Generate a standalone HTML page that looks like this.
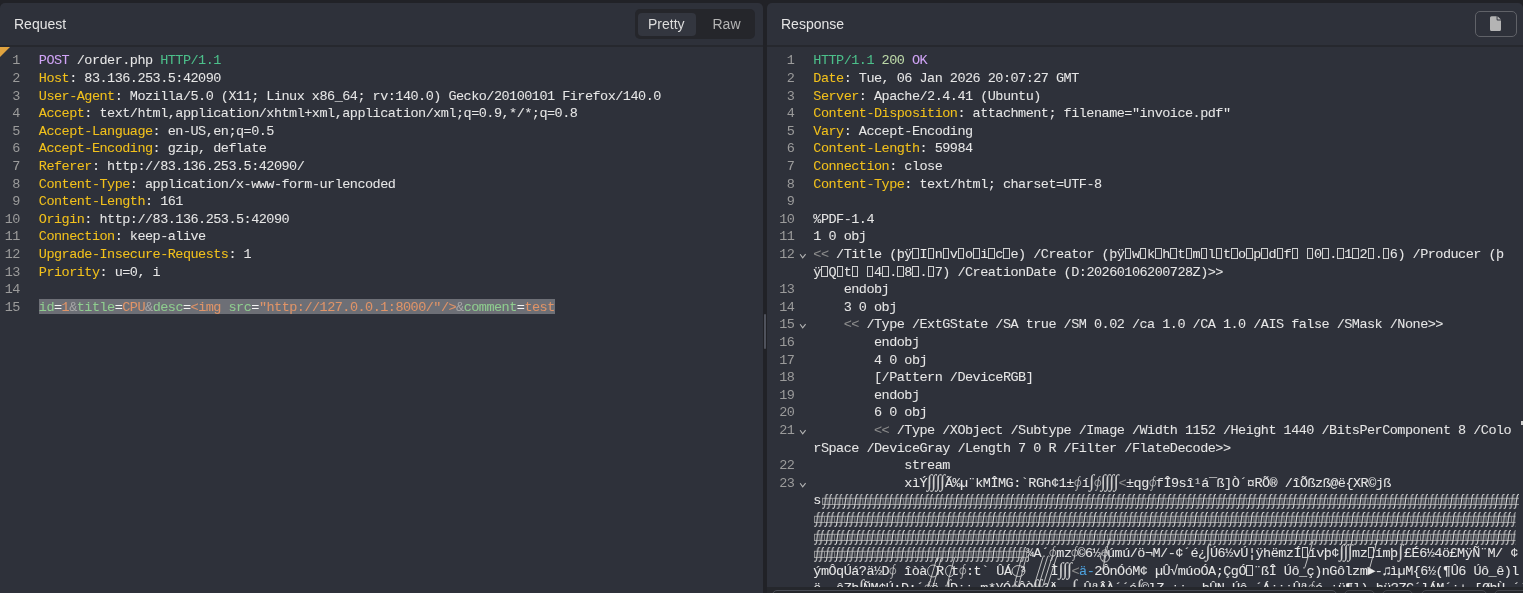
<!DOCTYPE html>
<html><head><meta charset="utf-8"><style>
*{margin:0;padding:0;box-sizing:border-box}
html,body{width:1523px;height:593px;overflow:hidden;background:#212227}
#wrap{position:absolute;left:0;top:0;width:1523px;height:593px;will-change:transform}
body{position:relative;font-family:"Liberation Sans",sans-serif}
.panel{position:absolute;top:3px;height:600px;background:#2e313a;border-radius:5px 5px 0 0;overflow:hidden}
#req{left:0;width:763px}
#res{left:767px;width:756px}
.hdr{position:absolute;left:0;top:0;right:0;height:44px;border-bottom:2px solid #26282e}
.title{position:absolute;top:13px;font-size:14px;color:#e4e4e4}
.ln,.num{position:absolute;white-space:pre;font-family:"Liberation Mono",monospace;font-size:13.5px;letter-spacing:-0.516px;line-height:17px;height:17px;}
.ln{-webkit-text-stroke:0.05px currentColor}
.num{width:40px;text-align:right;color:#9b9b9b}
.sel{background:#6c6e75}
.W{color:#f4f4f4}.y{color:#f2c11c}.w{color:#e6e6e6}.p{color:#d0a4f6}.g{color:#4cbf8a}.lg{color:#bcd8a8}.n{color:#9b9b9b}.d{color:#8d8d8d}.G{color:#8fcd8f}.o{color:#e09468}.a{color:#a7a7a7}.b{color:#4ea3e0}
.fold{position:absolute}
.ig{position:absolute;white-space:pre;font-family:"Liberation Serif",serif;font-style:italic;font-size:18px;letter-spacing:-0.65px;line-height:17px;color:#cfcfcf;-webkit-text-stroke:0.1px #cfcfcf}
.og{position:absolute}
.tf{display:inline-block;width:6.5px;height:11px;border:1px solid #cfcfcf;margin-left:0.5px;margin-right:0.585px;vertical-align:-1px}
.seg{position:absolute;left:635px;top:6px;width:120px;height:30px;background:#25262b;border-radius:5px}
.pill{position:absolute;left:3px;top:4px;width:58px;height:23px;background:#33363f;border-radius:4px}
.segt{position:absolute;top:7px;font-size:14px}
.ibtn{position:absolute;left:708px;top:8px;width:42px;height:26px;border:1px solid #606268;border-radius:5px}
</style></head><body><div id="wrap">
<div class="panel" id="req"><div class="hdr"><div class="title" style="left:14px">Request</div>
<div class="seg"><div class="pill"></div><div class="segt" style="left:13px;color:#dcdcdc">Pretty</div><div class="segt" style="left:77.5px;color:#b4b4b4">Raw</div></div></div>
<div style="position:absolute;left:0;top:44px;width:0;height:0;border-top:10px solid #e0a33f;border-right:10px solid transparent"></div>
</div>
<div class="panel" id="res"><div class="hdr"><div class="title" style="left:14px">Response</div>
<div class="ibtn"><svg width="41" height="25" style="position:absolute;left:-2px;top:-2px"><path d="M17.5 6.2H22.6V9.4a1 1 0 0 0 1 1H27V19.4a1.5 1.5 0 0 1-1.5 1.5H17.5a1.5 1.5 0 0 1-1.5-1.5V7.7a1.5 1.5 0 0 1 1.5-1.5z" fill="#b4b4b4"/><path d="M23.5 6.3L27 9.6H24a0.5 0.5 0 0 1-0.5-0.5z" fill="#b4b4b4"/></svg></div></div>
</div>
<div class="num" style="left:-20.2px;top:52.00px">1</div>
<div class="ln " style="left:38.8px;top:52.00px"><span class="p">POST</span><span class="w"> /order.php </span><span class="g">HTTP/1.1</span></div>
<div class="num" style="left:-20.2px;top:70.00px">2</div>
<div class="ln " style="left:38.8px;top:70.00px"><span class="y">Host</span><span class="w">: 83.136.253.5:42090</span></div>
<div class="num" style="left:-20.2px;top:88.00px">3</div>
<div class="ln " style="left:38.8px;top:88.00px"><span class="y">User-Agent</span><span class="w">: Mozilla/5.0 (X11; Linux x86_64; rv:140.0) Gecko/20100101 Firefox/140.0</span></div>
<div class="num" style="left:-20.2px;top:105.00px">4</div>
<div class="ln " style="left:38.8px;top:105.00px"><span class="y">Accept</span><span class="w">: text/html,application/xhtml+xml,application/xml;q=0.9,*/*;q=0.8</span></div>
<div class="num" style="left:-20.2px;top:123.00px">5</div>
<div class="ln " style="left:38.8px;top:123.00px"><span class="y">Accept-Language</span><span class="w">: en-US,en;q=0.5</span></div>
<div class="num" style="left:-20.2px;top:140.00px">6</div>
<div class="ln " style="left:38.8px;top:140.00px"><span class="y">Accept-Encoding</span><span class="w">: gzip, deflate</span></div>
<div class="num" style="left:-20.2px;top:158.00px">7</div>
<div class="ln " style="left:38.8px;top:158.00px"><span class="y">Referer</span><span class="w">: http://83.136.253.5:42090/</span></div>
<div class="num" style="left:-20.2px;top:176.00px">8</div>
<div class="ln " style="left:38.8px;top:176.00px"><span class="y">Content-Type</span><span class="w">: application/x-www-form-urlencoded</span></div>
<div class="num" style="left:-20.2px;top:193.00px">9</div>
<div class="ln " style="left:38.8px;top:193.00px"><span class="y">Content-Length</span><span class="w">: 161</span></div>
<div class="num" style="left:-20.2px;top:211.00px">10</div>
<div class="ln " style="left:38.8px;top:211.00px"><span class="y">Origin</span><span class="w">: http://83.136.253.5:42090</span></div>
<div class="num" style="left:-20.2px;top:228.00px">11</div>
<div class="ln " style="left:38.8px;top:228.00px"><span class="y">Connection</span><span class="w">: keep-alive</span></div>
<div class="num" style="left:-20.2px;top:246.00px">12</div>
<div class="ln " style="left:38.8px;top:246.00px"><span class="y">Upgrade-Insecure-Requests</span><span class="w">: 1</span></div>
<div class="num" style="left:-20.2px;top:264.00px">13</div>
<div class="ln " style="left:38.8px;top:264.00px"><span class="y">Priority</span><span class="w">: u=0, i</span></div>
<div class="num" style="left:-20.2px;top:281.00px">14</div>
<div class="num" style="left:-20.2px;top:299.00px">15</div>
<div style="position:absolute;left:39px;top:299px;width:516px;height:15px;background:#6d6f76"></div>
<div class="ln " style="left:38.8px;top:299.00px"><span class="G">id</span><span class="W">=</span><span class="o">1</span><span class="a">&amp;</span><span class="G">title</span><span class="W">=</span><span class="o">CPU</span><span class="a">&amp;</span><span class="G">desc</span><span class="W">=</span><span class="o">&lt;img</span><span class="W"> </span><span class="G">src</span><span class="W">=</span><span class="o">"http://127.0.0.1:8000/"/&gt;</span><span class="a">&amp;</span><span class="G">comment</span><span class="W">=</span><span class="o">test</span></div>
<div class="num" style="left:754.3px;top:52.00px">1</div>
<div class="ln " style="left:813.3px;top:52.00px"><span class="g">HTTP/1.1</span><span class="w"> </span><span class="lg">200</span><span class="w"> </span><span class="p">OK</span></div>
<div class="num" style="left:754.3px;top:70.00px">2</div>
<div class="ln " style="left:813.3px;top:70.00px"><span class="y">Date</span><span class="w">: Tue, 06 Jan 2026 20:07:27 GMT</span></div>
<div class="num" style="left:754.3px;top:88.00px">3</div>
<div class="ln " style="left:813.3px;top:88.00px"><span class="y">Server</span><span class="w">: Apache/2.4.41 (Ubuntu)</span></div>
<div class="num" style="left:754.3px;top:105.00px">4</div>
<div class="ln " style="left:813.3px;top:105.00px"><span class="y">Content-Disposition</span><span class="w">: attachment; filename="invoice.pdf"</span></div>
<div class="num" style="left:754.3px;top:123.00px">5</div>
<div class="ln " style="left:813.3px;top:123.00px"><span class="y">Vary</span><span class="w">: Accept-Encoding</span></div>
<div class="num" style="left:754.3px;top:140.00px">6</div>
<div class="ln " style="left:813.3px;top:140.00px"><span class="y">Content-Length</span><span class="w">: 59984</span></div>
<div class="num" style="left:754.3px;top:158.00px">7</div>
<div class="ln " style="left:813.3px;top:158.00px"><span class="y">Connection</span><span class="w">: close</span></div>
<div class="num" style="left:754.3px;top:176.00px">8</div>
<div class="ln " style="left:813.3px;top:176.00px"><span class="y">Content-Type</span><span class="w">: text/html; charset=UTF-8</span></div>
<div class="num" style="left:754.3px;top:193.00px">9</div>
<div class="num" style="left:754.3px;top:211.00px">10</div>
<div class="ln " style="left:813.3px;top:211.00px"><span class="w">%PDF-1.4</span></div>
<div class="num" style="left:754.3px;top:228.00px">11</div>
<div class="ln " style="left:813.3px;top:228.00px"><span class="w">1 0 obj</span></div>
<div class="num" style="left:754.3px;top:246.00px">12</div>
<svg class="fold" style="left:799px;top:252.50px" width="8" height="8"><path d="M1.1 1.2L3.7 4.9L6.6 1.2" stroke="#b4b4b4" stroke-width="1.1" fill="none"/></svg>
<div class="ln " style="left:813.3px;top:246.00px"><span class="d">&lt;&lt;</span><span class="w"> /Title (þÿ<i class="tf"></i>I<i class="tf"></i>n<i class="tf"></i>v<i class="tf"></i>o<i class="tf"></i>i<i class="tf"></i>c<i class="tf"></i>e) /Creator (þÿ<i class="tf"></i>w<i class="tf"></i>k<i class="tf"></i>h<i class="tf"></i>t<i class="tf"></i>m<i class="tf"></i>l<i class="tf"></i>t<i class="tf"></i>o<i class="tf"></i>p<i class="tf"></i>d<i class="tf"></i>f<i class="tf"></i> <i class="tf"></i>0<i class="tf"></i>.<i class="tf"></i>1<i class="tf"></i>2<i class="tf"></i>.<i class="tf"></i>6) /Producer (þ</span></div>
<div class="ln " style="left:813.3px;top:264.00px"><span class="w">ÿ<i class="tf"></i>Q<i class="tf"></i>t<i class="tf"></i> <i class="tf"></i>4<i class="tf"></i>.<i class="tf"></i>8<i class="tf"></i>.<i class="tf"></i>7) /CreationDate (D:20260106200728Z)&gt;&gt;</span></div>
<div class="num" style="left:754.3px;top:281.00px">13</div>
<div class="ln " style="left:813.3px;top:281.00px"><span class="w">    endobj</span></div>
<div class="num" style="left:754.3px;top:299.00px">14</div>
<div class="ln " style="left:813.3px;top:299.00px"><span class="w">    3 0 obj</span></div>
<div class="num" style="left:754.3px;top:316.00px">15</div>
<svg class="fold" style="left:799px;top:322.50px" width="8" height="8"><path d="M1.1 1.2L3.7 4.9L6.6 1.2" stroke="#b4b4b4" stroke-width="1.1" fill="none"/></svg>
<div class="ln " style="left:813.3px;top:316.00px"><span class="w">    </span><span class="d">&lt;&lt;</span><span class="w"> /Type /ExtGState /SA true /SM 0.02 /ca 1.0 /CA 1.0 /AIS false /SMask /None&gt;&gt;</span></div>
<div class="num" style="left:754.3px;top:334.00px">16</div>
<div class="ln " style="left:813.3px;top:334.00px"><span class="w">        endobj</span></div>
<div class="num" style="left:754.3px;top:352.00px">17</div>
<div class="ln " style="left:813.3px;top:352.00px"><span class="w">        4 0 obj</span></div>
<div class="num" style="left:754.3px;top:369.00px">18</div>
<div class="ln " style="left:813.3px;top:369.00px"><span class="w">        [/Pattern /DeviceRGB]</span></div>
<div class="num" style="left:754.3px;top:387.00px">19</div>
<div class="ln " style="left:813.3px;top:387.00px"><span class="w">        endobj</span></div>
<div class="num" style="left:754.3px;top:404.00px">20</div>
<div class="ln " style="left:813.3px;top:404.00px"><span class="w">        6 0 obj</span></div>
<div class="num" style="left:754.3px;top:422.00px">21</div>
<svg class="fold" style="left:799px;top:428.50px" width="8" height="8"><path d="M1.1 1.2L3.7 4.9L6.6 1.2" stroke="#b4b4b4" stroke-width="1.1" fill="none"/></svg>
<div class="ln " style="left:813.3px;top:422.00px"><span class="w">        </span><span class="d">&lt;&lt;</span><span class="w"> /Type /XObject /Subtype /Image /Width 1152 /Height 1440 /BitsPerComponent 8 /Colo</span></div>
<div class="ln " style="left:813.3px;top:440.00px"><span class="w">rSpace /DeviceGray /Length 7 0 R /Filter /FlateDecode&gt;&gt;</span></div>
<div class="num" style="left:754.3px;top:457.00px">22</div>
<div class="ln " style="left:813.3px;top:457.00px"><span class="w">            stream</span></div>
<div class="num" style="left:754.3px;top:475.00px">23</div>
<svg class="fold" style="left:799px;top:481.50px" width="8" height="8"><path d="M1.1 1.2L3.7 4.9L6.6 1.2" stroke="#b4b4b4" stroke-width="1.1" fill="none"/></svg>
<div class="ln " style="left:904.3px;top:475.00px"><span class="w">xìÝ</span></div>
<div class="ig" style="left:927.1px;top:472.50px">∫∫∫∫</div>
<div class="ln " style="left:944.9px;top:475.00px"><span class="w">Ã%µ¨kMÎMG:`RGh¢1±</span></div>
<svg class="og" style="left:1074.2px;top:475.00px" width="8" height="17"><ellipse cx="3.8" cy="8" rx="3" ry="3.2" stroke="#c4c4c4" stroke-width="0.8" fill="none"/><path d="M1.2 15.2C2.2 16 2.9 15.4 3.2 13.7L4.6 3.3C4.9 1.5 5.7 1.0 6.7 1.8" stroke="#d0d0d0" stroke-width="0.9" fill="none"/></svg>
<div class="ln " style="left:1081.8px;top:475.00px"><span class="w">í</span></div>
<div class="ig" style="left:1089.2px;top:472.50px">∫</div>
<svg class="og" style="left:1093.5px;top:475.00px" width="8" height="17"><ellipse cx="3.8" cy="8" rx="3" ry="3.2" stroke="#c4c4c4" stroke-width="0.8" fill="none"/><path d="M1.2 15.2C2.2 16 2.9 15.4 3.2 13.7L4.6 3.3C4.9 1.5 5.7 1.0 6.7 1.8" stroke="#d0d0d0" stroke-width="0.9" fill="none"/></svg>
<div class="ig" style="left:1100.8px;top:472.50px">∫∫∫∫</div>
<div class="ln " style="left:1118.4px;top:475.00px"><span class="d">&lt;</span></div>
<div class="ln " style="left:1126.0px;top:475.00px"><span class="w">±qg</span></div>
<svg class="og" style="left:1148.7px;top:475.00px" width="8" height="17"><ellipse cx="3.8" cy="8" rx="3" ry="3.2" stroke="#c4c4c4" stroke-width="0.8" fill="none"/><path d="M1.2 15.2C2.2 16 2.9 15.4 3.2 13.7L4.6 3.3C4.9 1.5 5.7 1.0 6.7 1.8" stroke="#d0d0d0" stroke-width="0.9" fill="none"/></svg>
<div class="ln " style="left:1155.8px;top:475.00px"><span class="w">fÎ9sî¹á¯ß]Ò´¤RÕ® /îÕßzß@ë{XR©jß</span></div>
<div class="ln " style="left:813.3px;top:492.00px"><span class="w">s</span></div>
<div class="ln " style="left:1026.0px;top:545.00px"><span class="w">¾A´</span></div>
<svg class="og" style="left:1049.0px;top:545.00px" width="8" height="17"><ellipse cx="3.8" cy="8" rx="3" ry="3.2" stroke="#c4c4c4" stroke-width="0.8" fill="none"/><path d="M1.2 15.2C2.2 16 2.9 15.4 3.2 13.7L4.6 3.3C4.9 1.5 5.7 1.0 6.7 1.8" stroke="#d0d0d0" stroke-width="0.9" fill="none"/></svg>
<div class="ln " style="left:1056.3px;top:545.00px"><span class="w">mz</span></div>
<svg class="og" style="left:1071.0px;top:545.00px" width="8" height="17"><ellipse cx="3.8" cy="8" rx="3" ry="3.2" stroke="#c4c4c4" stroke-width="0.8" fill="none"/><path d="M1.2 15.2C2.2 16 2.9 15.4 3.2 13.7L4.6 3.3C4.9 1.5 5.7 1.0 6.7 1.8" stroke="#d0d0d0" stroke-width="0.9" fill="none"/></svg>
<div class="ln " style="left:1077.5px;top:545.00px"><span class="w">©6½</span></div>
<svg class="og" style="left:1100.5px;top:545.00px" width="8" height="17"><ellipse cx="3.8" cy="8" rx="3" ry="3.2" stroke="#c4c4c4" stroke-width="0.8" fill="none"/><path d="M1.2 15.2C2.2 16 2.9 15.4 3.2 13.7L4.6 3.3C4.9 1.5 5.7 1.0 6.7 1.8" stroke="#d0d0d0" stroke-width="0.9" fill="none"/></svg>
<div class="ln " style="left:1107.0px;top:545.00px"><span class="w">úmú/ö¬M/-¢´é¿</span></div>
<div class="ig" style="left:1205.6px;top:542.50px">∫</div>
<div class="ln " style="left:1210.0px;top:545.00px"><span class="w">Ú6½vÚ¦ÿhëmzÍ</span></div>
<div class="ln " style="left:1301.0px;top:545.00px"><span class="w"><i class="tf"></i>ívþ¢</span></div>
<div class="ig" style="left:1339.3px;top:542.50px">∫∫∫</div>
<div class="ln " style="left:1352.1px;top:545.00px"><span class="w">mz<i class="tf"></i>ímþ</span></div>
<div class="ig" style="left:1398.3px;top:542.50px">∫</div>
<div class="ln " style="left:1404.0px;top:545.00px"><span class="w">£É6½4ö£MÿÑ¨M/ ¢</span></div>
<div class="ln " style="left:813.3px;top:563.00px"><span class="w">ýmÔqÚá?ä½D</span></div>
<svg class="og" style="left:889.2px;top:563.00px" width="8" height="17"><ellipse cx="3.8" cy="8" rx="3" ry="3.2" stroke="#c4c4c4" stroke-width="0.8" fill="none"/><path d="M1.2 15.2C2.2 16 2.9 15.4 3.2 13.7L4.6 3.3C4.9 1.5 5.7 1.0 6.7 1.8" stroke="#d0d0d0" stroke-width="0.9" fill="none"/></svg>
<div class="ln " style="left:896.5px;top:563.00px"><span class="w"> îòà</span></div>
<div class="ln " style="left:936.0px;top:563.00px"><span class="w">R</span></div>
<div class="ln " style="left:951.0px;top:563.00px"><span class="w">t</span></div>
<svg class="og" style="left:959.0px;top:563.00px" width="8" height="17"><ellipse cx="3.8" cy="8" rx="3" ry="3.2" stroke="#c4c4c4" stroke-width="0.8" fill="none"/><path d="M1.2 15.2C2.2 16 2.9 15.4 3.2 13.7L4.6 3.3C4.9 1.5 5.7 1.0 6.7 1.8" stroke="#d0d0d0" stroke-width="0.9" fill="none"/></svg>
<div class="ln " style="left:966.0px;top:563.00px"><span class="w">:t` ÛÁ</span></div>
<div class="ln " style="left:1019.0px;top:563.00px"><span class="w">³</span></div>
<div class="ln " style="left:1050.5px;top:563.00px"><span class="w">Ì</span></div>
<div class="ig" style="left:1058.5px;top:560.50px">∫∫∫</div>
<div class="ln " style="left:1071.5px;top:563.00px"><span class="d">&lt;</span></div>
<div class="ln " style="left:1079.1px;top:563.00px"><span class="b">ä-</span></div>
<div class="ln " style="left:1094.3px;top:563.00px"><span class="w">2ÔnÓóM¢ µÛ√múoÓA;ÇgÓ</span></div>
<div class="ln " style="left:1245.9px;top:563.00px"><span class="w"><i class="tf"></i>¨ßÎ Úô_ç)nGôlzm►-♫ìµM{6½(¶Û6 Úô_ê)l</span></div>
<div class="ln " style="left:813.3px;top:580.00px"><span class="w">ë~ ôZb</span></div>
<div class="ig" style="left:859px;top:577.50px">∫</div>
<div class="ln " style="left:863px;top:580.00px"><span class="w">ÑM¢Ú;D:´</span></div>
<svg class="og" style="left:924px;top:580.00px" width="8" height="17"><ellipse cx="3.8" cy="8" rx="3" ry="3.2" stroke="#c4c4c4" stroke-width="0.8" fill="none"/><path d="M1.2 15.2C2.2 16 2.9 15.4 3.2 13.7L4.6 3.3C4.9 1.5 5.7 1.0 6.7 1.8" stroke="#d0d0d0" stroke-width="0.9" fill="none"/></svg>
<div class="ln " style="left:931px;top:580.00px"><span class="w">ë </span></div>
<div class="ig" style="left:946px;top:577.50px">∫</div>
<div class="ln " style="left:950px;top:580.00px"><span class="w">D¡¡ m*¥Ó</span></div>
<svg class="og" style="left:1011px;top:580.00px" width="8" height="17"><ellipse cx="3.8" cy="8" rx="3" ry="3.2" stroke="#c4c4c4" stroke-width="0.8" fill="none"/><path d="M1.2 15.2C2.2 16 2.9 15.4 3.2 13.7L4.6 3.3C4.9 1.5 5.7 1.0 6.7 1.8" stroke="#d0d0d0" stroke-width="0.9" fill="none"/></svg>
<div class="ln " style="left:1018px;top:580.00px"><span class="w">ÔÒ</span></div>
<div class="ig" style="left:1033px;top:577.50px">∫∫</div>
<div class="ln " style="left:1042px;top:580.00px"><span class="w">³Ä  </span></div>
<div class="ig" style="left:1072px;top:577.50px">∫</div>
<div class="ln " style="left:1076px;top:580.00px"><span class="w"> ÛªÂÀ´´ó</span></div>
<div class="ig" style="left:1137px;top:577.50px">∫</div>
<div class="ln " style="left:1141px;top:580.00px"><span class="w">©lZ ¡¡  bÛN Úô ´Á¿¡¡Ûª</span></div>
<svg class="og" style="left:1308px;top:580.00px" width="8" height="17"><ellipse cx="3.8" cy="8" rx="3" ry="3.2" stroke="#c4c4c4" stroke-width="0.8" fill="none"/><path d="M1.2 15.2C2.2 16 2.9 15.4 3.2 13.7L4.6 3.3C4.9 1.5 5.7 1.0 6.7 1.8" stroke="#d0d0d0" stroke-width="0.9" fill="none"/></svg>
<div class="ln " style="left:1315px;top:580.00px"><span class="w">ó ¡ü¶l) bü?ZÇ´lÁM´¡+ [ØbÙ ´´é</span></div>
<svg style="position:absolute;left:0;top:0" width="1523" height="593"><g stroke="#d0d0d0" stroke-width="0.9" fill="none"><path d="M927 585.5C928 586.5 929 586 929 585L936.5 559C936.5 558 937.5 557.5 938.5 558.5"/><path d="M931.5 585.5C932.5 586.5 933.5 586 933.5 585L941 559C941 558 942 557.5 943 558.5"/><path d="M945 585.5C946 586.5 947 586 947 585L954.5 558C954.5 557 955.5 556.5 956.5 557.5"/><path d="M1012 586.5C1013 587.5 1014 587 1014 586L1021.5 558C1021.5 557 1022.5 556.5 1023.5 557.5"/><path d="M1016.5 586.5C1017.5 587.5 1018.5 587 1018.5 586L1026 558C1026 557 1027 556.5 1028 557.5"/><path d="M1032 586.5C1033 587.5 1034 587 1034 586L1043 557C1043 556 1044 555.5 1045 556.5"/><path d="M1036.5 586.5C1037.5 587.5 1038.5 587 1038.5 586L1047.5 557C1047.5 556 1048.5 555.5 1049.5 556.5"/><path d="M1041 586.5C1042 587.5 1043 587 1043 586L1052 557C1052 556 1053 555.5 1054 556.5"/><path d="M1045.5 586.5C1046.5 587.5 1047.5 587 1047.5 586L1056.5 557C1056.5 556 1057.5 555.5 1058.5 556.5"/><path d="M1303 567.5C1304 568.5 1305 568 1305 567L1313 541C1313 540 1314 539.5 1315 540.5"/><path d="M1368 567.5C1369 568.5 1370 568 1370 567L1377 541C1377 540 1378 539.5 1379 540.5"/><path d="M1101 568.5C1102 569.5 1103 569 1103 568L1109 540C1109 539 1110 538.5 1111 539.5"/><ellipse cx="933" cy="571" rx="5.5" ry="6"/><ellipse cx="950" cy="571" rx="4.5" ry="5.5"/><ellipse cx="1018.5" cy="571" rx="6.5" ry="5.5"/><ellipse cx="1105" cy="557" rx="4.5" ry="5"/></g></svg>
<svg style="position:absolute;left:0;top:0" width="1523" height="593"><defs><g id="cell" fill="none"><path stroke="#a8a8a8" stroke-width="0.8" d="M0 5.3H10.1M0 11.5H10.1M0.5 5.3V11.5M5.55 5.3V11.5"/><path stroke="#dcdcdc" stroke-width="1.05" d="M0.4 15.0C1.4 15.8 2.1 15.2 2.4 13.5L3.8 3.3C4.1 1.5 4.9 1.0 5.9 1.8M5.0 15.0C6.0 15.8 6.7 15.2 7.0 13.5L8.4 3.3C8.7 1.5 9.5 1.0 10.5 1.8"/></g><pattern id="pt25" patternUnits="userSpaceOnUse" x="822" y="493.00" width="10.1" height="17"><use href="#cell"/></pattern><pattern id="pt26" patternUnits="userSpaceOnUse" x="814" y="511.00" width="10.1" height="17"><use href="#cell"/></pattern><pattern id="pt27" patternUnits="userSpaceOnUse" x="814" y="529.00" width="10.1" height="17"><use href="#cell"/></pattern><pattern id="pt28" patternUnits="userSpaceOnUse" x="814" y="546.00" width="10.1" height="17"><use href="#cell"/></pattern></defs><rect x="822" y="493.00" width="697" height="17" fill="url(#pt25)"/><rect x="814" y="511.00" width="701.5999999999999" height="17" fill="url(#pt26)"/><rect x="814" y="529.00" width="701.5999999999999" height="17" fill="url(#pt27)"/><rect x="814" y="546.00" width="215" height="17" fill="url(#pt28)"/></svg>
<div style="position:absolute;left:1521px;top:421px;width:2px;height:4px;background:#d0d0d0"></div>
<div style="position:absolute;left:764px;top:314px;width:2px;height:35px;background:#4f525c;border-radius:1px"></div>
<div style="position:absolute;left:767px;top:587px;width:756px;height:6px;background:#25272c">
<div style="position:absolute;left:5px;top:3px;width:565px;height:20px;border:1px solid #4a4d56;border-radius:5px"></div>
<div style="position:absolute;left:577px;top:3px;width:31px;height:20px;border:1px solid #44464d;border-radius:5px"></div>
<div style="position:absolute;left:615px;top:3px;width:31px;height:20px;border:1px solid #44464d;border-radius:5px"></div>
<div style="position:absolute;left:654px;top:3px;width:66px;height:20px;border:1px solid #44464d;border-radius:5px"></div>
<div style="position:absolute;left:727px;top:3px;width:40px;height:20px;border:1px solid #44464d;border-radius:5px"></div>
</div>
</div></body></html>
